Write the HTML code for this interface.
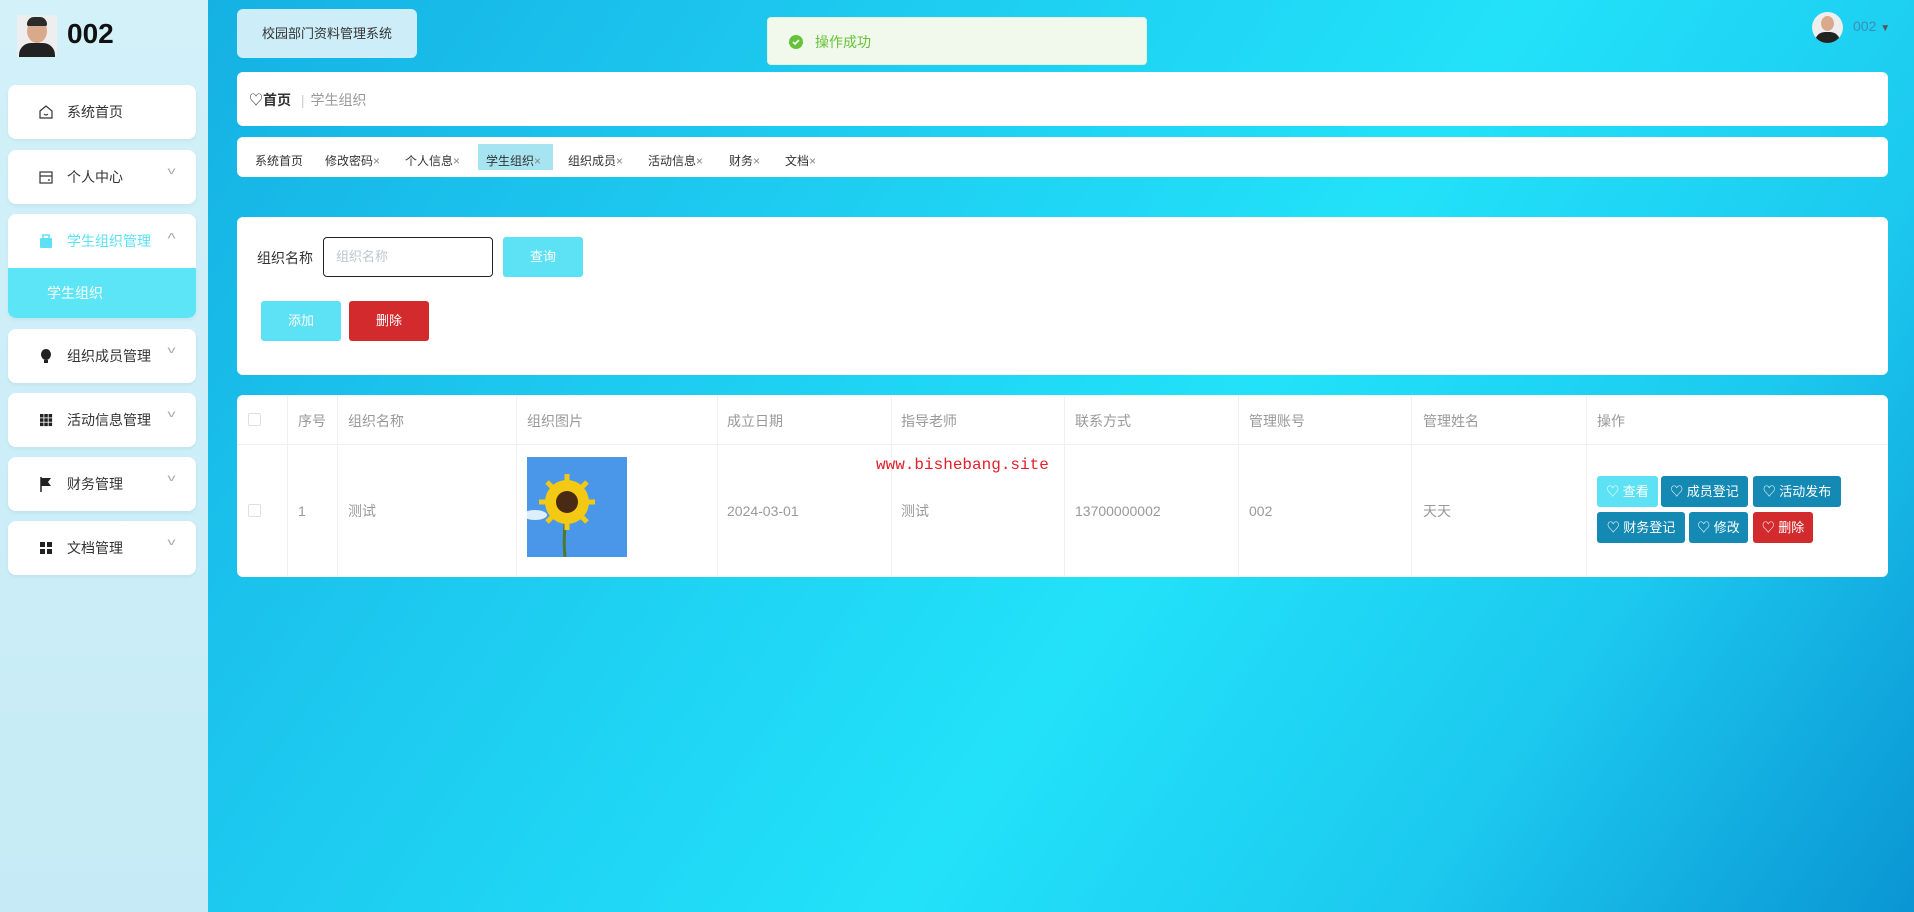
<!DOCTYPE html>
<html><head><meta charset="utf-8"><style>
*{box-sizing:border-box;margin:0;padding:0}
body{width:1914px;height:912px;overflow:hidden;position:relative;font-family:"Liberation Sans","Noto Sans CJK SC",sans-serif;font-size:14px;color:#333;
background:linear-gradient(125deg,#12a9df 0%,#1cc6ee 30%,#22e2f9 60%,#1cc9ef 80%,#0a95d3 100%);}
.abs{position:absolute}
.side{left:0;top:0;width:208px;height:912px;background:linear-gradient(180deg,#d2f1f9,#c6ebf6)}
.mi{position:absolute;left:8px;width:188px;height:54px;background:#fff;border-radius:8px;box-shadow:0 2px 4px rgba(0,0,0,.05)}
.mi .ic{position:absolute;left:30px;top:19px;width:16px;height:16px}
.mi .t{position:absolute;left:59px;top:0;line-height:54px;font-size:14px;color:#333}
.mi .ar{position:absolute;right:22px;top:16px;font-size:10px;color:#aaa;transform:scaleX(1.6)}
.card{background:#fff;border-radius:6px;position:absolute}
.tab{position:absolute;top:151px;font-size:12px;color:#333;line-height:20px}
.tab i{font-style:normal;color:#888}
.th{position:absolute;top:411px;font-size:14px;color:#999}
.td{position:absolute;top:502px;font-size:14px;color:#999;line-height:18px}
.vl{position:absolute;top:396px;width:1px;height:180px;background:#eef0f2}
.btn{position:absolute;height:31px;border-radius:3px;color:#fff;font-size:13px;line-height:31px;text-align:center;background:#1389b4}
</style></head><body>
<div class="abs side"></div>
<div class="abs" style="left:17px;top:15px;width:40px;height:42px;background:#eee;overflow:hidden">
 <div class="abs" style="left:10px;top:4px;width:20px;height:24px;border-radius:50%;background:#d9a98c"></div>
 <div class="abs" style="left:10px;top:2px;width:20px;height:9px;border-radius:8px 8px 2px 2px;background:#2b2b2b"></div>
 <div class="abs" style="left:2px;top:28px;width:36px;height:20px;border-radius:12px 12px 0 0;background:#222"></div>
</div>
<div class="abs" style="left:67px;top:18px;font-size:28px;font-weight:bold;color:#111">002</div>

<div class="mi" style="top:85px"><svg class="ic" viewBox="0 0 16 16" fill="none" stroke="#333" stroke-width="1.2"><path d="M2 7L8 2l6 5v7H2z"/><path d="M6 10q2 2 4 0"/></svg><span class="t">系统首页</span></div>
<div class="mi" style="top:150px"><svg class="ic" viewBox="0 0 16 16" fill="none" stroke="#333" stroke-width="1.2"><rect x="2" y="3" width="12" height="11"/><path d="M2 7h12M10 11h2"/></svg><span class="t">个人中心</span><span class="ar">v</span></div>
<div class="mi" style="top:214px;height:104px;overflow:hidden"><svg class="ic" viewBox="0 0 16 16"><rect x="2" y="5" width="12" height="10" rx="1" fill="#5ce1f5"/><rect x="5" y="2" width="6" height="4" fill="none" stroke="#5ce1f5" stroke-width="1.5"/></svg><span class="t" style="color:#5ce1f5">学生组织管理</span><span class="ar" style="transform:scaleX(1.6) rotate(180deg)">v</span>
 <div class="abs" style="left:0;top:54px;width:188px;height:50px;background:#5ce5f7;color:#fff;line-height:50px;padding-left:39px">学生组织</div></div>
<div class="mi" style="top:329px"><svg class="ic" viewBox="0 0 16 16"><ellipse cx="8" cy="6.5" rx="5" ry="5.5" fill="#222"/><rect x="6" y="12" width="4" height="3" fill="#222"/></svg><span class="t">组织成员管理</span><span class="ar">v</span></div>
<div class="mi" style="top:393px"><svg class="ic" viewBox="0 0 16 16" fill="#222"><rect x="2" y="2" width="3.5" height="3.5"/><rect x="6.3" y="2" width="3.5" height="3.5"/><rect x="10.6" y="2" width="3.5" height="3.5"/><rect x="2" y="6.3" width="3.5" height="3.5"/><rect x="6.3" y="6.3" width="3.5" height="3.5"/><rect x="10.6" y="6.3" width="3.5" height="3.5"/><rect x="2" y="10.6" width="3.5" height="3.5"/><rect x="6.3" y="10.6" width="3.5" height="3.5"/><rect x="10.6" y="10.6" width="3.5" height="3.5"/></svg><span class="t">活动信息管理</span><span class="ar">v</span></div>
<div class="mi" style="top:457px"><svg class="ic" viewBox="0 0 16 16"><path d="M3 1v15" stroke="#222" stroke-width="1.5"/><path d="M3 2h10l-3 4 3 4H3z" fill="#222"/></svg><span class="t">财务管理</span><span class="ar">v</span></div>
<div class="mi" style="top:521px"><svg class="ic" viewBox="0 0 16 16" fill="#222"><rect x="2" y="2" width="5" height="5"/><rect x="9" y="2" width="5" height="5"/><rect x="2" y="9" width="5" height="5"/><rect x="9" y="9" width="5" height="5"/></svg><span class="t">文档管理</span><span class="ar">v</span></div>

<div class="abs" style="left:237px;top:9px;width:180px;height:49px;background:#cdeef8;border-radius:6px;line-height:49px;text-align:center;font-size:13px;color:#333">校园部门资料管理系统</div>
<div class="abs" style="left:767px;top:17px;width:380px;height:48px;background:#f0f9eb;border:1px solid #e1f3d8;border-radius:4px">
 <div class="abs" style="left:21px;top:17px;width:14px;height:14px;border-radius:50%;background:#67c23a"><svg width="14" height="14" viewBox="0 0 14 14"><path d="M4 7l2 2 4-4" stroke="#fff" stroke-width="1.6" fill="none"/></svg></div>
 <div class="abs" style="left:47px;top:14px;font-size:14px;color:#67c23a">操作成功</div></div>
<div class="abs" style="left:1812px;top:12px;width:31px;height:31px;border-radius:50%;background:#eee;overflow:hidden">
 <div class="abs" style="left:9px;top:4px;width:13px;height:15px;border-radius:50%;background:#d9a98c"></div>
 <div class="abs" style="left:3px;top:20px;width:25px;height:14px;border-radius:10px 10px 0 0;background:#222"></div></div>
<div class="abs" style="left:1853px;top:18px;font-size:14px;color:#3a8fb8">002 <span style="font-size:10px;color:#555">▼</span></div>

<div class="card" style="left:237px;top:72px;width:1651px;height:54px">
 <div class="abs" style="left:12px;top:18px;font-size:14px;font-weight:bold;color:#333"><span style="font-weight:normal">♡</span>首页 <span style="color:#ccc;font-weight:normal;margin:0 6px">|</span><span style="color:#999;font-weight:normal">学生组织</span></div></div>
<div class="card" style="left:237px;top:137px;width:1651px;height:40px"></div>
<div class="abs" style="left:478px;top:144px;width:75px;height:26px;background:#a7e4f1"></div>
<div class="tab" style="left:255px">系统首页</div>
<div class="tab" style="left:325px">修改密码<i>×</i></div>
<div class="tab" style="left:405px">个人信息<i>×</i></div>
<div class="tab" style="left:486px">学生组织<i>×</i></div>
<div class="tab" style="left:568px">组织成员<i>×</i></div>
<div class="tab" style="left:648px">活动信息<i>×</i></div>
<div class="tab" style="left:729px">财务<i>×</i></div>
<div class="tab" style="left:785px">文档<i>×</i></div>

<div class="card" style="left:237px;top:217px;width:1651px;height:158px"></div>
<div class="abs" style="left:257px;top:248px;font-size:14px;color:#333">组织名称</div>
<div class="abs" style="left:323px;top:237px;width:170px;height:40px;border:1px solid #222;border-radius:4px;padding-left:12px;line-height:38px;color:#c0c4cc;font-size:13px">组织名称</div>
<div class="abs" style="left:503px;top:237px;width:80px;height:40px;background:#5ce1f5;border-radius:3px;color:#fff;text-align:center;line-height:40px;font-size:13px">查询</div>
<div class="abs" style="left:261px;top:301px;width:80px;height:40px;background:#5ce1f5;border-radius:3px;color:#fff;text-align:center;line-height:40px;font-size:13px">添加</div>
<div class="abs" style="left:349px;top:301px;width:80px;height:40px;background:#d32a2e;border-radius:3px;color:#fff;text-align:center;line-height:40px;font-size:13px">删除</div>

<div class="card" style="left:237px;top:395px;width:1651px;height:182px"></div>
<div class="abs" style="left:237px;top:444px;width:1651px;height:1px;background:#eef0f2"></div>
<div class="vl" style="left:287px"></div><div class="vl" style="left:337px"></div><div class="vl" style="left:516px"></div><div class="vl" style="left:717px"></div><div class="vl" style="left:891px"></div><div class="vl" style="left:1064px"></div><div class="vl" style="left:1238px"></div><div class="vl" style="left:1411px"></div><div class="vl" style="left:1586px"></div>
<div class="abs" style="left:248px;top:413px;width:13px;height:13px;border:1px solid #dcdfe6;border-radius:2px"></div>
<div class="abs" style="left:248px;top:504px;width:13px;height:13px;border:1px solid #dcdfe6;border-radius:2px"></div>
<div class="th" style="left:298px">序号</div><div class="th" style="left:348px">组织名称</div><div class="th" style="left:527px">组织图片</div><div class="th" style="left:727px">成立日期</div><div class="th" style="left:901px">指导老师</div><div class="th" style="left:1075px">联系方式</div><div class="th" style="left:1249px">管理账号</div><div class="th" style="left:1423px">管理姓名</div><div class="th" style="left:1597px">操作</div>
<div class="td" style="left:298px">1</div><div class="td" style="left:348px">测试</div><div class="td" style="left:727px">2024-03-01</div><div class="td" style="left:901px">测试</div><div class="td" style="left:1075px">13700000002</div><div class="td" style="left:1249px">002</div><div class="td" style="left:1423px">天天</div>
<svg class="abs" style="left:527px;top:457px" width="100" height="100" viewBox="0 0 100 100">
<rect width="100" height="100" fill="#4a96e8"/><ellipse cx="8" cy="58" rx="12" ry="5" fill="#dfeefb"/>
<path d="M39 60 Q36 80 38 100" stroke="#4c7a2a" stroke-width="3" fill="none"/>
<circle cx="40" cy="45" r="22" fill="#f3c914"/>
<g stroke="#f3c914" stroke-width="5"><path d="M40 17v56M12 45h56M20 25l40 40M60 25L20 65"/></g>
<circle cx="40" cy="45" r="11" fill="#4a2a12"/></svg>
<div class="abs" style="left:876px;top:456px;font-family:'Liberation Mono',monospace;font-size:16px;color:#e0202a">www.bishebang.site</div>
<div class="btn" style="left:1597px;top:476px;width:61px;background:#5ce1f5">♡ 查看</div>
<div class="btn" style="left:1661px;top:476px;width:87px">♡ 成员登记</div>
<div class="btn" style="left:1753px;top:476px;width:88px">♡ 活动发布</div>
<div class="btn" style="left:1597px;top:512px;width:88px">♡ 财务登记</div>
<div class="btn" style="left:1689px;top:512px;width:59px">♡ 修改</div>
<div class="btn" style="left:1753px;top:512px;width:60px;background:#d32a2e">♡ 删除</div>
</body></html>
